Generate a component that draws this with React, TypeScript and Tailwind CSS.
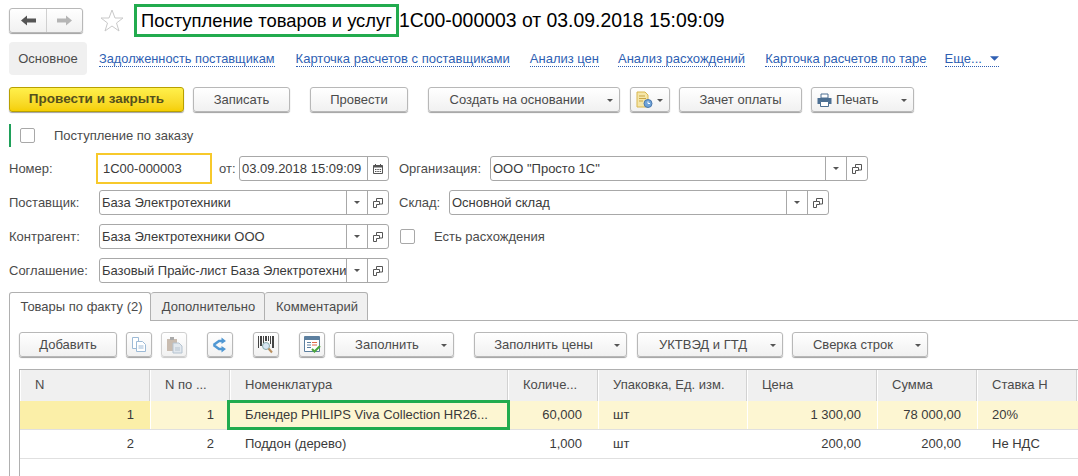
import React from 'react';

const Caret = ({ className = 'fill-[#555]' }: { className?: string }) => (
  <svg width="6" height="3" viewBox="0 0 6 3" className={className}>
    <path d="M0 0h6L3 3z" />
  </svg>
);

const OpenIcon = () => (
  <svg width="10" height="10" viewBox="0 0 10 10" fill="none" stroke="#555" strokeWidth="1">
    <path d="M3.5 3.5V0.5h6v5.5H6.5" />
    <path d="M3.5 3.5H0.5v6h3V6.5h3V3.5z" strokeWidth="1" />
  </svg>
);

const CalendarIcon = () => (
  <svg width="10" height="10" viewBox="0 0 10 10">
    <path d="M0.5 1.5h9v8h-9z" fill="#fff" stroke="#555" />
    <path d="M0.5 1.5h9v2h-9z" fill="#555" />
    <path d="M2 0h1v2H2zM7 0h1v2H7z" fill="#555" />
    <path d="M2 5h1.5v1H2zM4.3 5h1.5v1H4.3zM6.6 5h1.5v1H6.6zM2 7h1.5v1H2zM4.3 7h1.5v1H4.3zM6.6 7h1.5v1H6.6z" fill="#555" />
  </svg>
);

const DocClockIcon = () => (
  <svg width="17" height="17" viewBox="0 0 17 17">
    <path d="M1 1h8l3 3v12H1z" fill="#f5e6a8" stroke="#d9b64e" />
    <path d="M3 5h6M3 7.5h7M3 10h4" stroke="#c9a544" />
    <circle cx="12" cy="12.5" r="4" fill="#6fa3d8" stroke="#4a78ad" />
    <path d="M12 10.5v2h2" stroke="#fff" fill="none" />
  </svg>
);

const PrinterIcon = () => (
  <svg width="15" height="14" viewBox="0 0 15 14">
    <path d="M4 1h7v4H4z" fill="#fff" stroke="#4c6f92" />
    <path d="M0.5 5h14v6h-14z" fill="#4c6f92" />
    <path d="M3.5 8.5h8v5h-8z" fill="#fff" stroke="#4c6f92" />
  </svg>
);

const CopyIcon = () => (
  <svg width="16" height="16" viewBox="0 0 16 16" fill="#fff" stroke="#9dbad6">
    <path d="M1.5 0.5h6v11h-6z" />
    <path d="M5.5 4.5h6l3 3v7h-9z" />
    <path d="M7.5 9h5M7.5 11h5" />
  </svg>
);

const PasteIcon = () => (
  <svg width="17" height="18" viewBox="0 0 17 18">
    <path d="M1 3h10v12H1z" fill="#c9bcb0" />
    <path d="M4 1h4v3H4z" fill="#aaa" />
    <path d="M7 7h6l3 3v7H7z" fill="#e2e8ee" stroke="#b5c3d0" />
    <path d="M9 12h5M9 14h5" stroke="#b5c3d0" />
  </svg>
);

const BranchIcon = () => (
  <svg width="16" height="16" viewBox="0 0 16 16" fill="none">
    <path d="M1.5 8L7 4h3M1.5 8L7 12h3" stroke="#4f97d3" strokeWidth="2.4" />
    <path d="M9.5 0.5l4.5 3.5-4.5 3zM9.5 9l4.5 3-4.5 3.5z" fill="#4f97d3" />
  </svg>
);

const BarcodeIcon = () => (
  <svg width="16" height="18" viewBox="0 0 16 18">
    <path d="M0 0h1v12H0zM2 0h2v10H2zM5 0h1v7H5zM7 0h2v5H7zM10 0h1v5h-1zM12 0h1v8h-1zM14 0h2v12h-2z" fill="#444" />
    <circle cx="8" cy="10" r="3.5" fill="#d7e6f3" stroke="#8aa" />
    <path d="M10.5 12.5L14 16.5" stroke="#b98f5e" strokeWidth="2" />
  </svg>
);

const ListCheckIcon = () => (
  <svg width="17" height="17" viewBox="0 0 17 17">
    <path d="M0.5 0.5h15v15h-15z" fill="#fff" stroke="#5c7f9f" />
    <path d="M1 1h14v3H1z" fill="#5c7f9f" />
    <path d="M3 6.5h4M3 9h4M3 11.5h4" stroke="#5c7f9f" />
    <path d="M8 6.5h5M8 9h5" stroke="#e0694a" />
    <path d="M8 13l2.5 2.5L16 10" fill="none" stroke="#4ca63c" strokeWidth="2" />
  </svg>
);

type BtnProps = { className: string; children?: React.ReactNode; caret?: boolean };

const Btn = ({ className, children, caret }: BtnProps) => (
  <div className={`relative flex h-[25px] shrink-0 items-center justify-center rounded-[3px] border border-[#b8b8b8] bg-gradient-to-b from-white to-[#f1f1f1] shadow-[0_1px_1px_#a0a0a0] text-[#4b4b4b] ${className}`}>
    {children}
    {caret && (
      <span className="absolute right-[6px] top-[11px] flex">
        <Caret />
      </span>
    )}
  </div>
);

const IconBtn = ({ className, children, dim }: { className: string; children: React.ReactNode; dim?: boolean }) => (
  <div className={`flex h-[25px] w-[26px] shrink-0 items-center justify-center rounded-[3px] border ${dim ? 'border-[#d0d0d0] shadow-[0_1px_1px_#c8c8c8]' : 'border-[#b8b8b8] shadow-[0_1px_1px_#a0a0a0]'} bg-gradient-to-b from-white to-[#f1f1f1] ${className}`}>
    {children}
  </div>
);

const Field = ({ className, text, pick = true }: { className: string; text: string; pick?: boolean }) => (
  <div className={`flex h-[25px] shrink-0 items-center rounded-[3px] border border-[#a8a8a8] bg-white text-[#3a3a3a] ${className}`}>
    <span className="min-w-0 flex-1 whitespace-nowrap pl-[2px]">{text}</span>
    {pick && (
      <>
        <span className="flex h-full w-[21px] shrink-0 items-center justify-center border-l border-[#a8a8a8]">
          <Caret />
        </span>
        <span className="flex h-full w-[21px] shrink-0 items-center justify-center border-l border-[#a8a8a8]">
          <OpenIcon />
        </span>
      </>
    )}
  </div>
);

const Check = ({ className }: { className: string }) => (
  <span className={`h-[15px] w-[15px] shrink-0 rounded-[2px] border border-[#a8a8a8] bg-white ${className}`} />
);

const Link = ({ className, children }: { className: string; children: React.ReactNode }) => (
  <span className={`border-b border-dotted border-[#2f5fb3] leading-[15px] text-[#2f5fb3] whitespace-nowrap ${className}`}>{children}</span>
);

const head = 'flex items-center h-full pb-[2px] pl-[15px] border-r border-[#d2d2d2] bg-[#f0f0f0] shadow-[inset_1px_0_0_#fff]';
const numCell = 'flex items-center justify-end h-full pr-[16px]';
const txtCell = 'flex items-center h-full pl-[15px] whitespace-nowrap';

export default function App() {
  return (
    <div className="h-[476px] w-[1078px] overflow-hidden bg-white text-[13px] text-[#4b4b4b] [font-family:'Liberation_Sans',Arial,sans-serif]">
      {/* title */}
      <div className="flex items-center pl-[9px] pt-[4px]">
        <div className="flex h-[25px] w-[74px] items-center rounded-[3px] border border-[#b8b8b8] bg-gradient-to-b from-white to-[#f1f1f1] shadow-[0_1px_1px_#a0a0a0]">
          <span className="flex h-full w-[37px] items-center justify-center border-r border-[#d0d0d0]">
            <svg width="15" height="11" viewBox="0 0 15 11" fill="#555"><path d="M0 5.5L6 0.5v3h9v4H6v3z" /></svg>
          </span>
          <span className="flex h-full flex-1 items-center justify-center">
            <svg width="15" height="11" viewBox="0 0 15 11" fill="#b5b5b5"><path d="M15 5.5L9 0.5v3H0v4h9v3z" /></svg>
          </span>
        </div>
        <svg width="24" height="23" viewBox="0 0 24 23" fill="#fff" stroke="#c9c9c9" className="ml-[17px]">
          <path d="M12 1l3 8h8l-6.5 5 2.5 8-7-5-7 5 2.5-8L1 9h8z" />
        </svg>
        <div className="ml-[10px] flex h-[33px] w-[265px] items-center justify-center border-[3px] border-[#22ab4e] text-[18.4px] whitespace-nowrap text-black">
          Поступление товаров и услуг
        </div>
        <span className="text-[19.4px] whitespace-nowrap text-black">1С00-000003 от 03.09.2018 15:09:09</span>
      </div>

      {/* section links */}
      <div className="mt-[5px] flex items-center pl-[9px]">
        <span className="flex h-[33px] w-[78px] items-center justify-center rounded-[4px] bg-[#f0f0f0]">Основное</span>
        <Link className="ml-[12px] text-[12.8px]">Задолженность поставщикам</Link>
        <Link className="ml-[21px]">Карточка расчетов с поставщиками</Link>
        <Link className="ml-[20px]">Анализ цен</Link>
        <Link className="ml-[19px]">Анализ расхождений</Link>
        <Link className="ml-[20px]">Карточка расчетов по таре</Link>
        <Link className="ml-[18px] flex items-center">
          Еще...
          <span className="ml-[8px] flex">
            <Caret className="h-[5px] w-[9px] fill-[#2f5fb3]" />
          </span>
        </Link>
      </div>

      {/* command bar */}
      <div className="mt-[12px] flex pl-[9px]">
        <div className="flex h-[25px] w-[175px] items-center justify-center rounded-[3px] border border-[#b8a000] bg-gradient-to-b from-[#fff04a] to-[#f5cf00] text-[13.5px] font-bold text-[#55501c] shadow-[0_1px_1px_#a0a0a0]">
          Провести и закрыть
        </div>
        <Btn className="ml-[9px] w-[97px]">Записать</Btn>
        <Btn className="ml-[20px] w-[98px]">Провести</Btn>
        <Btn className="ml-[20px] w-[192px] pr-[14px]" caret>Создать на основании</Btn>
        <Btn className="ml-[10px] w-[40px] justify-start pl-[5px]" caret><DocClockIcon /></Btn>
        <Btn className="ml-[9px] w-[123px]">Зачет оплаты</Btn>
        <Btn className="ml-[9px] w-[103px] justify-start pl-[5px]" caret>
          <PrinterIcon />
          <span className="ml-[4px]">Печать</span>
        </Btn>
      </div>

      {/* header fields */}
      <div className="ml-[9px] mt-[12px] flex h-[23px] items-center border-l-2 border-[#1fa05a]">
        <Check className="ml-[9px]" />
        <span className="ml-[19px]">Поступление по заказу</span>
      </div>

      <div className="mt-[6px] flex h-[31px] items-center pl-[9px]">
        <span className="w-[87px]">Номер:</span>
        <span className="flex h-[31px] w-[116px] items-center border-2 border-[#f7c92b] pl-[5px] text-[#3a3a3a]">1С00-000003</span>
        <span className="ml-[7px] w-[20px]">от:</span>
        <div className="flex h-[25px] w-[150px] items-center rounded-[3px] border border-[#a8a8a8] text-[#3a3a3a]">
          <span className="flex-1 pl-[2px] whitespace-nowrap">03.09.2018 15:09:09</span>
          <span className="flex h-full w-[21px] shrink-0 items-center justify-center border-l border-[#a8a8a8]">
            <CalendarIcon />
          </span>
        </div>
        <span className="ml-[10px] w-[91px]">Организация:</span>
        <Field className="w-[378px]" text={'ООО "Просто 1С"'} />
      </div>

      <div className="mt-[6px] flex h-[25px] items-center pl-[9px]">
        <span className="w-[90px]">Поставщик:</span>
        <Field className="w-[290px]" text="База Электротехники" />
        <span className="ml-[10px] w-[50px]">Склад:</span>
        <Field className="w-[380px]" text="Основной склад" />
      </div>

      <div className="mt-[9px] flex h-[25px] items-center pl-[9px]">
        <span className="w-[90px]">Контрагент:</span>
        <Field className="w-[290px]" text="База Электротехники ООО" />
        <Check className="ml-[11px]" />
        <span className="ml-[19px]">Есть расхождения</span>
      </div>

      <div className="mt-[9px] flex h-[25px] items-center pl-[9px]">
        <span className="w-[90px]">Соглашение:</span>
        <Field className="w-[290px]" text="Базовый Прайс-лист База Электротехни" />
      </div>

      {/* tabs */}
      <div className="relative z-10 mt-[9px] flex h-[29px] pl-[9px]">
        <span className="flex w-[142px] items-center justify-center rounded-t-[3px] border border-b-0 border-[#b0b0b0] bg-white pl-[3px]">Товары по факту (2)</span>
        <span className="flex w-[114px] items-center justify-center rounded-t-[3px] border-y border-r border-[#b0b0b0] bg-[#f0f0f0] pl-[2px]">Дополнительно</span>
        <span className="flex w-[103px] items-center justify-center rounded-t-[3px] border-y border-r border-[#b0b0b0] bg-[#f0f0f0] pl-[2px]">Комментарий</span>
      </div>

      <div className="ml-[9px] -mt-[1px] h-[157px] border-l border-t border-[#b0b0b0] pl-[9px] pt-[11px]">
        <div className="flex">
          <Btn className="w-[98px]">Добавить</Btn>
          <IconBtn className="ml-[9px]"><CopyIcon /></IconBtn>
          <IconBtn className="ml-[9px]" dim><PasteIcon /></IconBtn>
          <IconBtn className="ml-[20px]"><BranchIcon /></IconBtn>
          <IconBtn className="ml-[20px]"><BarcodeIcon /></IconBtn>
          <IconBtn className="ml-[20px]"><ListCheckIcon /></IconBtn>
          <Btn className="ml-[9px] w-[120px] pr-[14px]" caret>Заполнить</Btn>
          <Btn className="ml-[20px] w-[153px] pr-[14px]" caret>Заполнить цены</Btn>
          <Btn className="ml-[10px] w-[146px] pr-[14px]" caret>УКТВЭД и ГТД</Btn>
          <Btn className="ml-[9px] w-[136px] pr-[14px]" caret>Сверка строк</Btn>
        </div>

        {/* table */}
        <div className="mt-[12px] h-[107px] w-[1060px] border-l border-t border-[#b0b0b0]">
          <div className="grid h-[31px] grid-cols-[130px_80px_278px_90px_149px_130px_100px_100px_1fr]">
            <span className={head}>N</span>
            <span className={head}>N по ...</span>
            <span className={head}>Номенклатура</span>
            <span className={head}>Количе...</span>
            <span className={head}>Упаковка, Ед. изм.</span>
            <span className={head}>Цена</span>
            <span className={head}>Сумма</span>
            <span className={head}>Ставка Н</span>
            <span className={head} />
          </div>
          <div className="grid h-[29px] grid-cols-[130px_80px_278px_90px_149px_130px_100px_100px_1fr] border-b border-[#e0e0e0] bg-[#fdf6d2] text-[#3a3a3a]">
            <span className={`${numCell} bg-[#fbefa8]`}>1</span>
            <span className={`${numCell} shadow-[inset_1px_0_0_#fff]`}>1</span>
            <span className="relative flex h-full items-center whitespace-nowrap pl-[15px]">
              Блендер PHILIPS Viva Collection HR26...
              <span className="absolute -bottom-[1px] -left-[3px] -right-[2px] -top-[1px] border-[3px] border-[#22ab4e]" />
            </span>
            <span className={numCell}>60,000</span>
            <span className={`${txtCell} shadow-[inset_1px_0_0_#fff]`}>шт</span>
            <span className={`${numCell} shadow-[inset_1px_0_0_#fff]`}>1 300,00</span>
            <span className={`${numCell} shadow-[inset_1px_0_0_#fff]`}>78 000,00</span>
            <span className={`${txtCell} shadow-[inset_1px_0_0_#fff]`}>20%</span>
            <span />
          </div>
          <div className="grid h-[29px] grid-cols-[130px_80px_278px_90px_149px_130px_100px_100px_1fr] border-b border-[#e0e0e0] text-[#3a3a3a]">
            <span className={numCell}>2</span>
            <span className={numCell}>2</span>
            <span className={txtCell}>Поддон (дерево)</span>
            <span className={numCell}>1,000</span>
            <span className={txtCell}>шт</span>
            <span className={numCell}>200,00</span>
            <span className={numCell}>200,00</span>
            <span className={txtCell}>Не НДС</span>
            <span />
          </div>
        </div>
      </div>
    </div>
  );
}
